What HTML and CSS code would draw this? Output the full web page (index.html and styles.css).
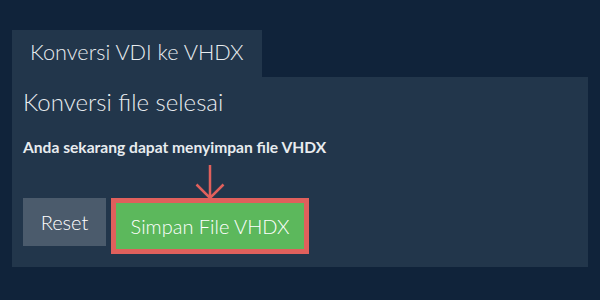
FILE: index.html
```html
<!DOCTYPE html>
<html lang="id">
<head>
    <meta charset="UTF-8">
    <meta name="viewport" content="width=device-width, initial-scale=1.0">
    <title>Konversi VDI ke VHDX</title>
    <link rel="stylesheet" href="styles.css">
</head>
<body>
    <div class="wrap">
        <div class="tab">Konversi VDI ke VHDX</div>
        <div class="panel">
            <h2>Konversi file selesai</h2>
            <p class="note">Anda sekarang dapat menyimpan file VHDX</p>
            <div class="actions">
                <button class="btn reset">Reset</button>
                <div class="save-box">
                    <svg class="arrow" width="30" height="36" viewBox="0 0 30 36">
                        <path d="M15 1 V34 M1.5 20.5 L15 34 L28.5 20.5" fill="none" stroke="#e0605c" stroke-width="2.5"/>
                    </svg>
                    <button class="btn save">Simpan File VHDX</button>
                </div>
            </div>
        </div>
    </div>
</body>
</html>
```

FILE: styles.css
```css
body {
    margin: 0;
    background: #10233a;
    color: #e8ecef;
    font-family: 'Lato', 'Liberation Sans', sans-serif;
}
.wrap {
    padding: 30px 12px 34px;
}
.tab {
    display: inline-block;
    background: #22364b;
    height: 47px;
    line-height: 44px;
    padding: 0 18px;
    font-size: 21.7px;
    font-weight: 300;
}
.panel {
    background: #22364b;
    padding: 10px 11px 13px;
}
h2 {
    margin: 0;
    font-weight: 300;
    font-size: 24px;
    line-height: 30px;
}
.note {
    margin: 20px 0 0;
    font-weight: bold;
    font-size: 15.6px;
    line-height: 20px;
}
.actions {
    display: flex;
    align-items: flex-start;
    gap: 5px;
    margin-top: 41px;
}
.btn {
    border: none;
    color: white;
    font-family: inherit;
    font-size: 20px;
    font-weight: 300;
    cursor: pointer;
}
.reset {
    background: #4b5b6c;
    width: 83px;
    height: 48px;
}
.save-box {
    position: relative;
    border: 5px solid #e0605c;
}
.save {
    display: block;
    background: #5cb85c;
    width: 188px;
    height: 46px;
}
.arrow {
    position: absolute;
    left: 79px;
    bottom: 100%;
    margin-bottom: 3px;
}
```
